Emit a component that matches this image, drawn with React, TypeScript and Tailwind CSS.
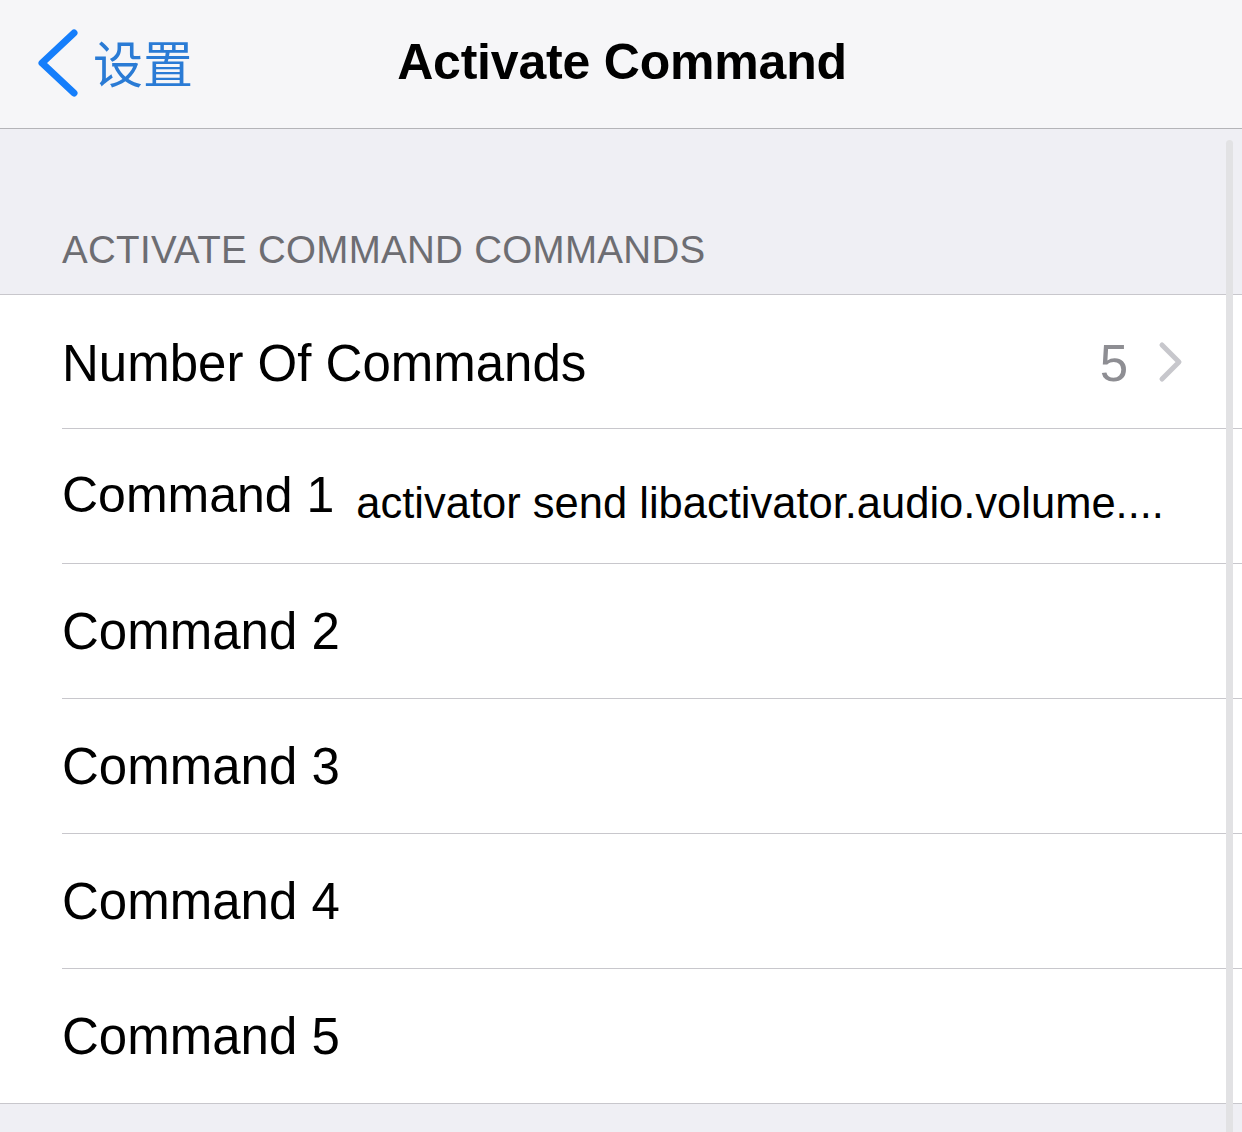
import React from "react";

const rows = ["Command 2", "Command 3", "Command 4", "Command 5"];

export default function App() {
  return (
    <div
      className="relative w-[1242px] h-[1132px] overflow-hidden bg-[#efeff4]"
      style={{ fontFamily: '"Liberation Sans", Arial, "Noto Sans CJK SC", sans-serif' }}
    >
      {/* Nav bar */}
      <div className="relative h-[129px] bg-[#f6f6f8] border-b border-[#b4b4b8] flex items-center">
        <div className="absolute left-[36px] top-[28px] flex items-center">
          <svg width="44" height="70" viewBox="0 0 44 70">
            <polyline
              points="38,5 6,35 38,65"
              fill="none"
              stroke="#157efb"
              strokeWidth="7"
              strokeLinecap="round"
              strokeLinejoin="round"
            />
          </svg>
          <span
            className="ml-[13px] text-[50px] leading-none text-[#2a7bd5] mt-[-4px]"
            style={{ fontFamily: '"Noto Sans CJK SC", sans-serif' }}
          >
            设置
          </span>
        </div>
        <div className="w-full text-center">
          <span className="inline-block translate-x-[1px] translate-y-[-2px] text-[50px] font-bold text-black leading-none tracking-[-0.2px]">
            Activate Command
          </span>
        </div>
      </div>

      {/* Section header */}
      <div className="h-[165px] flex items-end pl-[62px] pb-[25px]">
        <span className="text-[38.5px] leading-none text-[#6d6d72] tracking-[0.3px]">
          ACTIVATE COMMAND COMMANDS
        </span>
      </div>

      {/* Group */}
      <div className="bg-white border-t border-b border-[#c8c7cc]">
        <div className="ml-[62px] h-[134px] flex items-center pr-[58px] border-b border-[#c8c7cc]">
          <span className="text-[51px] leading-none text-black flex-1 translate-y-[2px]">Number Of Commands</span>
          <span className="text-[51px] leading-none text-[#8e8e93] mr-[30px] translate-y-[2px]">5</span>
          <svg width="26" height="42" viewBox="0 0 26 42">
            <polyline
              points="4,4 21,21 4,38"
              fill="none"
              stroke="#c7c7cc"
              strokeWidth="5"
              strokeLinecap="round"
              strokeLinejoin="round"
            />
          </svg>
        </div>
        <div className="ml-[62px] border-b border-[#c8c7cc] h-[135px] flex items-start pt-[41px]">
          <span className="text-[50px] leading-none text-black whitespace-nowrap">Command 1</span>
          <span className="ml-[22px] mt-[12px] text-[43.5px] leading-none text-black whitespace-nowrap">
            activator send libactivator.audio.volume....
          </span>
        </div>
        {rows.map((r, i) => (
          <div
            key={r}
            className={
              i < rows.length - 1
                ? "ml-[62px] h-[135px] flex items-center border-b border-[#c8c7cc]"
                : "ml-[62px] h-[134px] flex items-center"
            }
          >
            <span className="text-[51px] leading-none text-black">{r}</span>
          </div>
        ))}
      </div>

      {/* Scrollbar */}
      <div className="absolute right-[9px] top-[140px] w-[7px] h-[1000px] bg-[#e2e2e4] rounded-full" />
    </div>
  );
}
